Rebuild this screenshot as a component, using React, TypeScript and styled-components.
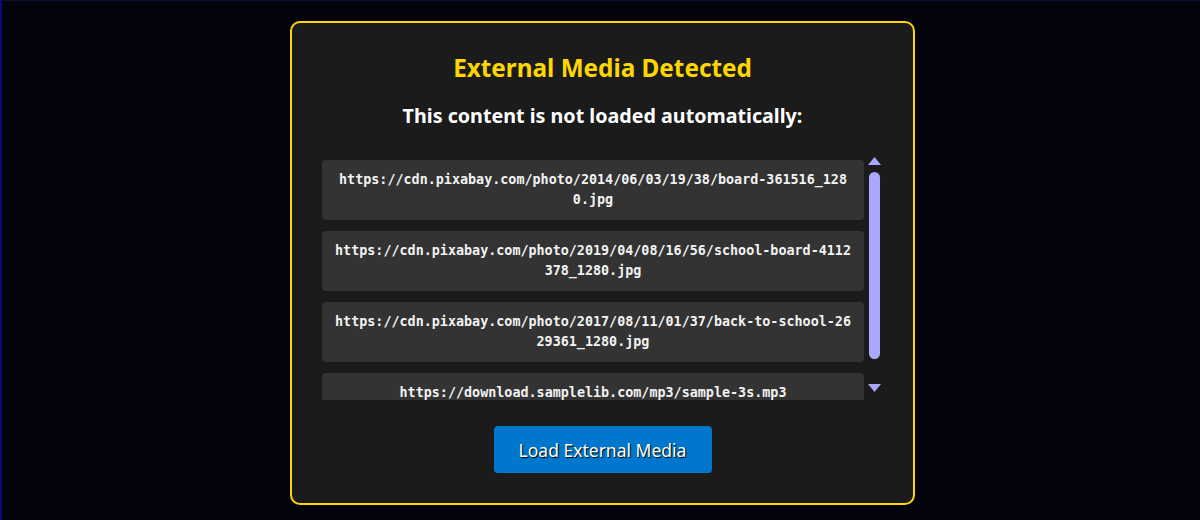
import React from "react";
import styled, { createGlobalStyle } from "styled-components";

const GlobalStyle = createGlobalStyle`
  html, body {
    margin: 0;
    padding: 0;
    background: #03030b;
  }
  body {
    font-family: "Noto Sans", "Lato", sans-serif;
  }
`;

const Page = styled.div`
  box-sizing: border-box;
  width: 1200px;
  height: 520px;
  border-left: 2px solid #0a0a80;
  border-top: 1px solid #0e0e30;
  padding-top: 20px;
  display: flex;
  justify-content: center;
  align-items: flex-start;
`;

const Card = styled.div`
  box-sizing: border-box;
  width: 625px;
  height: 484px;
  margin-left: 3px;
  background: #1b1b1b;
  border: 2px solid #ffd700;
  border-radius: 10px;
  padding: 26px 30px 0 30px;
  display: flex;
  flex-direction: column;
  align-items: center;
`;

const Title = styled.h2`
  margin: 0;
  color: #ffd700;
  font-size: 24.3px;
  font-weight: 700;
  line-height: 38px;
`;

const Subtitle = styled.h3`
  margin: 11px 0 0 0;
  color: #ffffff;
  font-size: 19.7px;
  font-weight: 700;
  line-height: 36px;
`;

const ListArea = styled.div`
  box-sizing: border-box;
  align-self: stretch;
  margin-top: 20px;
  height: 246px;
  padding-right: 2px;
  display: flex;
  gap: 3px;
`;

const List = styled.div`
  box-sizing: border-box;
  flex: 1;
  height: 100%;
  overflow-y: auto;
  padding-top: 6px;
  scrollbar-width: none;
  &::-webkit-scrollbar {
    display: none;
  }
`;

const Item = styled.div`
  background: #333333;
  border-radius: 4px;
  padding: 10px;
  margin-bottom: 11px;
  color: #f2f2f2;
  font-family: "DejaVu Sans Mono", "Liberation Mono", monospace;
  font-size: 13.4px;
  font-weight: 700;
  line-height: 20px;
  text-align: center;
  word-break: break-all;
`;

const Spacer = styled.div`
  height: 18px;
`;

const ScrollBar = styled.div`
  width: 14px;
  display: flex;
  flex-direction: column;
  align-items: center;
  padding-top: 3px;
`;

const Track = styled.div`
  flex: 1;
  width: 11px;
  padding-top: 7px;
`;

const Thumb = styled.div`
  width: 11px;
  height: 187px;
  border-radius: 6px;
  background: #a8a8ff;
`;

const Arrow = ({ down }: { down?: boolean }) => (
  <svg width="13" height="8" viewBox="0 0 13 8" style={{ display: "block", marginBottom: down ? 8 : 0 }}>
    <polygon points={down ? "0,0 13,0 6.5,8" : "6.5,0 13,8 0,8"} fill="#a8a8ff" />
  </svg>
);

const LoadButton = styled.button`
  margin-top: 26px;
  width: 218px;
  height: 47px;
  border: none;
  border-radius: 4px;
  background: #0077cc;
  color: #ffffff;
  font-family: "Noto Sans", "Lato", sans-serif;
  font-size: 17.5px;
  font-weight: 400;
  text-shadow: 1px 1px 1px #000000;
  cursor: pointer;
`;

const urls = [
  "https://cdn.pixabay.com/photo/2014/06/03/19/38/board-361516_1280.jpg",
  "https://cdn.pixabay.com/photo/2019/04/08/16/56/school-board-4112378_1280.jpg",
  "https://cdn.pixabay.com/photo/2017/08/11/01/37/back-to-school-2629361_1280.jpg",
  "https://download.samplelib.com/mp3/sample-3s.mp3",
];

const App: React.FC = () => (
  <Page>
    <GlobalStyle />
    <Card>
      <Title>External Media Detected</Title>
      <Subtitle>This content is not loaded automatically:</Subtitle>
      <ListArea>
        <List>
          {urls.map((u) => (
            <Item key={u}>{u}</Item>
          ))}
          <Spacer />
        </List>
        <ScrollBar>
          <Arrow />
          <Track>
            <Thumb />
          </Track>
          <Arrow down />
        </ScrollBar>
      </ListArea>
      <LoadButton>Load External Media</LoadButton>
    </Card>
  </Page>
);

export default App;
